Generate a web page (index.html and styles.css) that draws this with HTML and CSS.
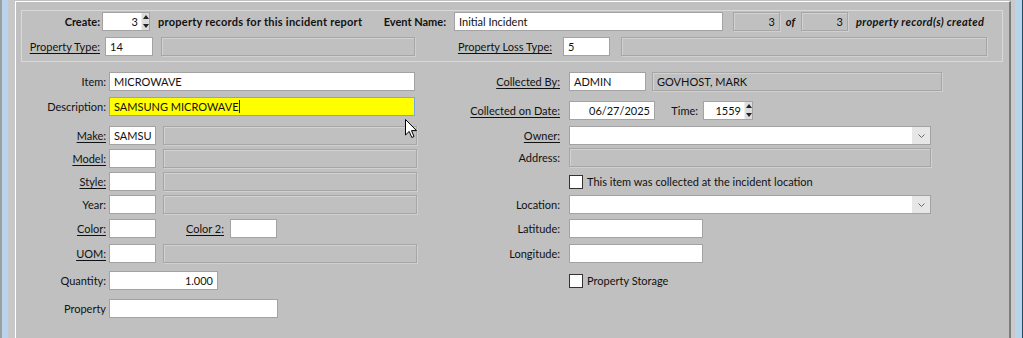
FILE: index.html
```html
<!DOCTYPE html>
<html lang="en">
<head>
    <meta charset="UTF-8">
    <title>Property Records</title>
    <link rel="stylesheet" href="styles.css">
</head>
<body>
    <div class="frame">
        <div class="chrome-left"></div>
        <div class="panel">
            <div class="group">
                <div class="row">
                    <span class="lbl bold w-create">Create:</span>
                    <div class="box spin w48"><span class="val">3</span><span class="arrows"><i class="up"></i><i class="down"></i></span></div>
                    <span class="bold txt-create">property records for this incident report</span>
                    <span class="lbl bold w-event">Event Name:</span>
                    <div class="box w269 ml6">Initial Incident</div>
                    <div class="box ro num w47 ml10">3</div>
                    <span class="bold ital of">of</span>
                    <div class="box ro num w47">3</div>
                    <span class="bold ital ml8 txt-created">property record(s) created</span>
                </div>
                <div class="row">
                    <span class="lbl u w-create">Property Type:</span>
                    <div class="box w48 ml3">14</div>
                    <div class="box ro w254 ml8"></div>
                    <span class="lbl u w-loss">Property Loss Type:</span>
                    <div class="box w47 ml7">5</div>
                    <div class="box ro w366 ml11"></div>
                </div>
            </div>

            <div class="main">
                <div class="col col-left">
                    <div class="row">
                        <span class="lbl w-left">Item:</span>
                        <div class="box w306">MICROWAVE</div>
                    </div>
                    <div class="row mt6">
                        <span class="lbl w-left">Description:</span>
                        <div class="box focus w306">SAMSUNG MICROWAVE<span class="caret"></span></div>
                    </div>
                    <div class="row mt10">
                        <span class="lbl u w-left">Make:</span>
                        <div class="box w47">SAMSU</div>
                        <div class="box ro w254 ml7"></div>
                    </div>
                    <div class="row mt4">
                        <span class="lbl u w-left">Model:</span>
                        <div class="box w47"></div>
                        <div class="box ro w254 ml7"></div>
                    </div>
                    <div class="row mt4">
                        <span class="lbl u w-left">Style:</span>
                        <div class="box w47"></div>
                        <div class="box ro w254 ml7"></div>
                    </div>
                    <div class="row mt4">
                        <span class="lbl w-left">Year:</span>
                        <div class="box w47"></div>
                        <div class="box ro w254 ml7"></div>
                    </div>
                    <div class="row mt5">
                        <span class="lbl u w-left">Color:</span>
                        <div class="box w47"></div>
                        <span class="lbl u w-color2">Color 2:</span>
                        <div class="box w47 ml5"></div>
                    </div>
                    <div class="row mt6">
                        <span class="lbl u w-left">UOM:</span>
                        <div class="box w47"></div>
                        <div class="box ro w254 ml7"></div>
                    </div>
                    <div class="row mt8">
                        <span class="lbl w-left">Quantity:</span>
                        <div class="box num w109">1.000</div>
                    </div>
                    <div class="row mt9">
                        <span class="lbl w-left">Property</span>
                        <div class="box w169"></div>
                    </div>
                </div>

                <div class="col col-right">
                    <div class="row">
                        <span class="lbl u w-right">Collected By:</span>
                        <div class="box w77">ADMIN</div>
                        <div class="box ro w290 ml6">GOVHOST, MARK</div>
                    </div>
                    <div class="row mt10">
                        <span class="lbl u w-right">Collected on Date:</span>
                        <div class="box num w86">06/27/2025</div>
                        <span class="lbl w-time">Time:</span>
                        <div class="box spin w50 ml3"><span class="val">1559</span><span class="arrows"><i class="up"></i><i class="down"></i></span></div>
                    </div>
                    <div class="row mt6">
                        <span class="lbl u w-right">Owner:</span>
                        <div class="box combo w362"><span class="val"></span><span class="drop"><svg width="7" height="4" viewBox="0 0 7 4"><path d="M0.5 0.5 L3.5 3.5 L6.5 0.5" fill="none" stroke="#6b6b6b" stroke-width="1"/></svg></span></div>
                    </div>
                    <div class="row mt3">
                        <span class="lbl w-right">Address:</span>
                        <div class="box ro w362"></div>
                    </div>
                    <div class="row mt5">
                        <span class="w-right"></span>
                        <span class="chk"></span>
                        <span class="chk-lbl">This item was collected at the incident location</span>
                    </div>
                    <div class="row mt4">
                        <span class="lbl w-right">Location:</span>
                        <div class="box combo w362"><span class="val"></span><span class="drop"><svg width="7" height="4" viewBox="0 0 7 4"><path d="M0.5 0.5 L3.5 3.5 L6.5 0.5" fill="none" stroke="#6b6b6b" stroke-width="1"/></svg></span></div>
                    </div>
                    <div class="row mt5">
                        <span class="lbl w-right">Latitude:</span>
                        <div class="box w134"></div>
                    </div>
                    <div class="row mt6">
                        <span class="lbl w-right">Longitude:</span>
                        <div class="box w134"></div>
                    </div>
                    <div class="row mt8">
                        <span class="w-right"></span>
                        <span class="chk"></span>
                        <span class="chk-lbl">Property Storage</span>
                    </div>
                </div>
            </div>
        </div>
        <div class="chrome-right"></div>
    </div>

    <!-- mouse pointer over the description field -->
    <svg class="cursor" width="13" height="20" viewBox="0 0 13 20">
        <path d="M0.5 0.5 L0.5 16 L4.2 12.4 L6.8 18.5 L9 17.5 L6.5 11.6 L11.5 11.6 Z" fill="#fff" stroke="#000" stroke-width="1" stroke-linejoin="miter"/>
    </svg>
</body>
</html>
```

FILE: styles.css
```css
* {
    box-sizing: border-box;
}
html, body {
    margin: 0;
    height: 100%;
}
body {
    font-family: Lato, "Liberation Sans", sans-serif;
    font-size: 11px;
    color: #111;
    background-color: #c0c0c0;
    overflow: hidden;
    position: relative;
}
.frame {
    display: flex;
    height: 338px;
}
.chrome-left {
    width: 15px;
    flex: none;
    background: linear-gradient(to right, #9e9e9e 0, #9e9e9e 2px, #bad3ec 2px, #bad3ec 8px, #c8c8c8 8px);
}
.panel {
    width: 996px;
    flex: none;
    margin-top: 1px;
    border-top: 1px solid #fff;
    border-left: 1px solid #fff;
    border-right: 2px solid #7c7c7c;
    background-color: #c0c0c0;
}
.chrome-right {
    flex: 1;
    background: linear-gradient(to right, #cacaca 0, #cacaca 4px, #bad3ec 4px, #bad3ec 11px, #1f4c5c 11px);
}

/* header group box */
.group {
    margin: 8px 0 0 5px;
    width: 982px;
    height: 52px;
    border: 1px solid #d9d9d9;
    padding-top: 1px;
}
.group .row + .row {
    margin-top: 6px;
}

.row {
    display: flex;
    align-items: center;
    height: 19px;
    white-space: nowrap;
}
.lbl {
    text-align: right;
    padding-right: 2px;
    flex: none;
}
.bold {
    font-weight: bold;
}
.ital {
    font-style: italic;
}
.u {
    text-decoration: underline;
    text-underline-offset: 2px;
}
.w-create { width: 80px; }
.txt-create {
    margin-left: 8px;
    width: 214px;
    letter-spacing: 0.25px;
}
.txt-created {
    letter-spacing: 0.35px;
}
.w-event { width: 76px; }
.w-loss { width: 141px; padding-right: 4px; }
.of {
    width: 21px;
    text-align: center;
}

/* fields */
.box {
    height: 19px;
    flex: none;
    border: 1px solid #a3a3a3;
    background-color: #fff;
    padding: 0 4px;
    display: flex;
    align-items: center;
    overflow: hidden;
}
.box.num {
    justify-content: flex-end;
}
.box.ro {
    background-color: #c0c0c0;
    border-color: #a6a6a6;
    box-shadow: inset 1px 1px 0 #d2d2d2, 1px 1px 0 #d0d0d0;
}
.box.focus {
    background-color: #ffff00;
    border-color: #7aa7dc;
}
.caret {
    display: inline-block;
    width: 1px;
    height: 13px;
    background-color: #1a1a8c;
}
.spin {
    padding-right: 0;
}
.spin .val {
    flex: 1;
    text-align: right;
    padding-right: 3px;
}
.arrows {
    width: 8px;
    height: 17px;
    background-color: #dcdcdc;
    display: flex;
    flex-direction: column;
    align-items: center;
    justify-content: space-around;
    border-left: 1px solid #eee;
}
.arrows i {
    width: 0;
    height: 0;
    border-left: 3px solid transparent;
    border-right: 3px solid transparent;
}
.arrows .up {
    border-bottom: 4px solid #222;
}
.arrows .down {
    border-top: 4px solid #222;
}
.combo {
    padding-right: 0;
}
.combo .val {
    flex: 1;
}
.drop {
    width: 18px;
    height: 17px;
    background-color: #e6e6e6;
    display: flex;
    align-items: center;
    justify-content: center;
}
.chk {
    width: 14px;
    height: 14px;
    flex: none;
    margin-left: 7px;
    background-color: #fff;
    border: 1px solid #333;
}
.chk-lbl {
    margin-left: 4px;
}

.w47 { width: 47px; }
.w48 { width: 48px; }
.w50 { width: 50px; }
.w77 { width: 77px; }
.w86 { width: 86px; }
.w109 { width: 109px; }
.w134 { width: 134px; }
.w169 { width: 169px; }
.w254 { width: 254px; }
.w269 { width: 269px; }
.w290 { width: 290px; }
.w306 { width: 306px; }
.w362 { width: 362px; }
.w366 { width: 366px; }

.ml3 { margin-left: 3px; }
.ml5 { margin-left: 5px; }
.ml6 { margin-left: 6px; }
.ml7 { margin-left: 7px; }
.ml8 { margin-left: 8px; }
.ml10 { margin-left: 10px; }
.ml11 { margin-left: 11px; }
.mt3 { margin-top: 3px; }
.mt4 { margin-top: 4px; }
.mt5 { margin-top: 5px; }
.mt6 { margin-top: 6px; }
.mt8 { margin-top: 8px; }
.mt9 { margin-top: 9px; }
.mt10 { margin-top: 10px; }

/* main form */
.main {
    display: flex;
    margin-top: 10px;
}
.col-left {
    width: 404px;
}
.col-left .lbl {
    width: 91px;
    padding-right: 1px;
}
.col-left .lbl + .box {
    margin-left: 2px;
}
.col-left .w-color2 {
    width: 72px;
    padding-right: 4px;
}
.col-right .w-right {
    width: 142px;
    flex: none;
}
.col-right .w-right + .box {
    margin-left: 7px;
}
.col-right .w-time {
    width: 45px;
}

.cursor {
    position: absolute;
    left: 405px;
    top: 119px;
}
```
